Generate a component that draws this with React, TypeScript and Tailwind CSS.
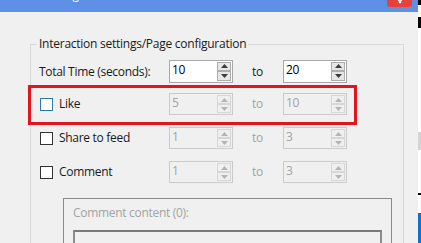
import React from "react";

function Arrow({ up, disabled }: { up?: boolean; disabled?: boolean }) {
  return (
    <div
      className={`flex-1 flex items-center justify-center border ${
        disabled ? "border-[#d6d6d6] bg-[#efefef]" : "border-[#adadad] bg-[#e6e6e6]"
      }`}
    >
      <svg width="7" height="4" viewBox="0 0 7 4">
        <polygon
          points={up ? "0,4 7,4 3.5,0" : "0,0 7,0 3.5,4"}
          fill={disabled ? "#b4b4b4" : "#3c3c3c"}
        />
      </svg>
    </div>
  );
}

function Spin({ value, disabled, tall }: { value: string; disabled?: boolean; tall?: boolean }) {
  return (
    <div
      className={`w-[64px] ${tall ? "h-[23px]" : "h-[22px]"} flex border ${
        disabled ? "border-[#cacaca] bg-[#f0f0f0] text-[#a3a3a3]" : "border-[#a8a8a8] bg-white text-black"
      }`}
    >
      <span className="flex-1 pl-[2px] leading-[15px] pt-[1px]">{value}</span>
      <div className="flex flex-col w-[14px] my-[1px] mr-[1px]">
        <Arrow up disabled={disabled} />
        <Arrow disabled={disabled} />
      </div>
    </div>
  );
}

function Check({ focus }: { focus?: boolean }) {
  return (
    <span
      className={`ml-[9px] w-[13px] h-[13px] border bg-white shrink-0 ${
        focus ? "border-[#2d78ad]" : "border-[#333333]"
      }`}
    />
  );
}

export default function App() {
  return (
    <div className="w-[421px] h-[243px] overflow-hidden flex bg-white font-['Open_Sans',sans-serif] text-[12px] tracking-[-0.3px] text-[#1a1a1a]">
      <div className="w-[418px] flex flex-col bg-[#f0f0f0]">
        <div className="h-[12px] bg-[#5e91e6] flex shrink-0 overflow-hidden">
          <span className="ml-[42px] -mt-[11px] leading-none text-white">Settings</span>
          <div className="ml-auto mr-[6px] w-[25px] h-[7px] bg-[#e8403b] rounded-b-[3px] flex justify-center">
            <svg width="12" height="7" viewBox="0 0 12 7">
              <path d="M2 -3 L7 3 M10 -3 L5 3" stroke="#ffffff" strokeWidth="1.3" />
            </svg>
          </div>
        </div>
        <div className="flex-1 pl-[30px] pt-[32px]">
          <div className="relative w-[374px] h-[260px] border border-[#d8d8d8] pt-[10px]">
            <span className="absolute -top-[9px] left-[6px] px-[2px] bg-[#f0f0f0] leading-[16px] tracking-[-0.25px]">
              Interaction settings/Page configuration
            </span>

            <div className="flex items-center h-[32px]">
              <span className="w-[138px] pl-[8px] pt-[2px]">Total Time (seconds):</span>
              <Spin value="10" tall />
              <span className="w-[50px] pl-[19px] pt-[2px]">to</span>
              <Spin value="20" tall />
            </div>

            <div className="relative flex items-center h-[34px]">
              <span className="absolute -top-[2px] -left-[3px] w-[329px] h-[40px] border-[3px] border-[#e0151d]" />
              <div className="w-[138px] flex items-center">
                <Check focus />
                <span className="ml-[6px]">Like</span>
              </div>
              <Spin value="5" disabled />
              <span className="w-[50px] pl-[19px] text-[#a3a3a3]">to</span>
              <Spin value="10" disabled />
            </div>

            <div className="flex items-center h-[34px]">
              <div className="w-[138px] flex items-center">
                <Check />
                <span className="ml-[6px]">Share to feed</span>
              </div>
              <Spin value="1" disabled />
              <span className="w-[50px] pl-[19px] text-[#a3a3a3]">to</span>
              <Spin value="3" disabled />
            </div>

            <div className="flex items-center h-[34px]">
              <div className="w-[138px] flex items-center">
                <Check />
                <span className="ml-[6px]">Comment</span>
              </div>
              <Spin value="1" disabled />
              <span className="w-[50px] pl-[19px] text-[#a3a3a3]">to</span>
              <Spin value="3" disabled />
            </div>

            <div className="ml-[32px] mt-[9px] w-[329px] h-[80px] border border-[#8a8a8a] px-[9px] pt-[6px]">
              <div className="leading-[15px] text-[#a3a3a3]">Comment content (0):</div>
              <div className="mt-[10px] h-[40px] border-2 border-[#8c8c8c] border-t-[#7a7a7a] bg-[#f0f0f0]" />
            </div>
          </div>
        </div>
      </div>
      <div className="w-[3px] flex flex-col bg-white">
        <div className="h-[5px] bg-black" />
        <div className="h-[12px]" />
        <div className="h-[11px] bg-black" />
        <div className="h-[104px]" />
        <div className="h-[18px] bg-[#d4d4d4]" />
        <div className="h-[43px]" />
        <div className="h-[2px] bg-black" />
        <div className="h-[18px]" />
        <div className="flex-1 bg-[#0a74d6]" />
      </div>
    </div>
  );
}
